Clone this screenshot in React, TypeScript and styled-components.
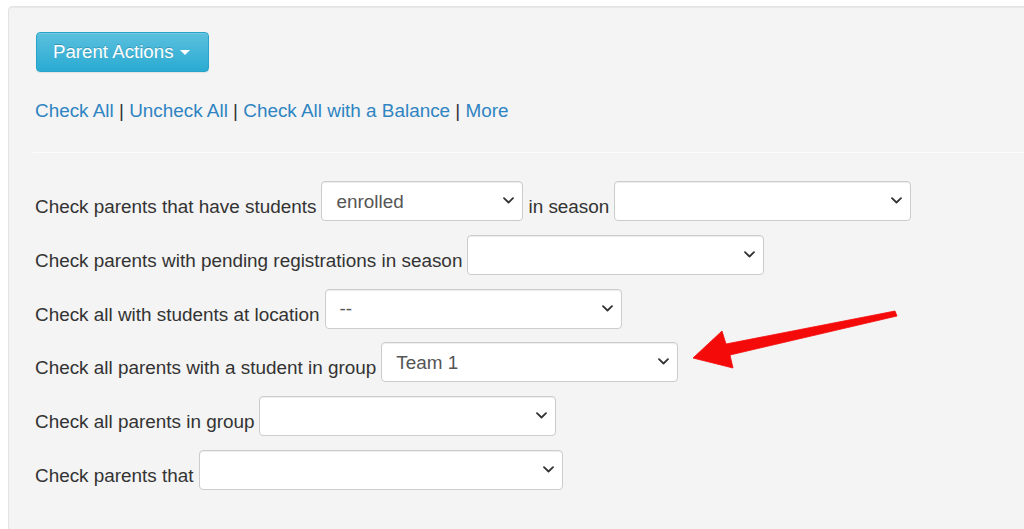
import React from 'react';
import styled, { createGlobalStyle } from 'styled-components';

const Global = createGlobalStyle`
  html, body { margin: 0; padding: 0; background: #fff; overflow: hidden; }
  body {
    font-family: "Liberation Sans", Arial, Helvetica, sans-serif;
    font-size: 18.9px;
    color: #333;
  }
`;

const Page = styled.div`
  position: relative;
  width: 1024px;
  height: 529px;
  overflow: hidden;
  box-sizing: border-box;
  padding: 6px 0 0 8px;
`;

const Well = styled.div`
  width: 1050px;
  min-height: 560px;
  box-sizing: border-box;
  background: #f4f4f4;
  border: 1px solid #e3e3e3;
  border-radius: 4px;
  box-shadow: inset 0 1px 1px rgba(0, 0, 0, 0.05);
  padding: 25px 0 0 26px;
`;

const ActionButton = styled.button`
  display: inline-flex;
  align-items: center;
  gap: 6px;
  height: 40px;
  box-sizing: border-box;
  margin-left: 1px;
  padding: 0 18px 0 16px;
  border: 1px solid #28a4c9;
  border-radius: 4px;
  background: linear-gradient(to bottom, #5bc0de 0%, #2aabd2 100%);
  color: #fff;
  font: inherit;
  font-size: 18.7px;
  text-shadow: 0 -1px 0 rgba(0, 0, 0, 0.2);
  box-shadow: inset 0 1px 0 rgba(255, 255, 255, 0.15), 0 1px 1px rgba(0, 0, 0, 0.075);
  cursor: pointer;
`;

const Caret = styled.span`
  display: inline-block;
  width: 0;
  height: 0;
  border-top: 5px solid #fff;
  border-left: 5px solid transparent;
  border-right: 5px solid transparent;
`;

const LinkBar = styled.div`
  margin-top: 25px;
  line-height: 27px;
  color: #333;
`;

const Link = styled.a`
  color: #2f84c2;
  text-decoration: none;
  cursor: pointer;
`;

const Divider = styled.hr`
  margin: 28px 0 28px -2px;
  border: 0;
  border-top: 1px solid #fbfbfb;
  height: 0;
`;

const Rows = styled.div`
  display: flex;
  flex-direction: column;
  gap: 13.8px;
`;

const Row = styled.div`
  display: flex;
  align-items: flex-end;
  gap: 5px;
`;

const Label = styled.span`
  line-height: 29px;
  white-space: nowrap;
`;

const SelectBox = styled.div<{ $w: number }>`
  position: relative;
  flex: none;
  width: ${(p) => p.$w}px;
  height: 40px;
`;

const NativeSelect = styled.select`
  appearance: none;
  -webkit-appearance: none;
  width: 100%;
  height: 100%;
  box-sizing: border-box;
  border: 1px solid #ccc;
  border-radius: 4px;
  background: #fff;
  padding: 0 30px 0 14px;
  font: inherit;
  color: #555;
  box-shadow: inset 0 1px 1px rgba(0, 0, 0, 0.075);
  outline: none;
`;

const Chevron = styled.svg`
  position: absolute;
  right: 9px;
  top: 50%;
  margin-top: -4px;
  pointer-events: none;
`;

const Overlay = styled.svg`
  position: absolute;
  left: 0;
  top: 0;
  pointer-events: none;
`;

function Select({ w, value }: { w: number; value?: string }) {
  return (
    <SelectBox $w={w}>
      <NativeSelect defaultValue={value ?? ''}>
        <option value={value ?? ''}>{value ?? ''}</option>
      </NativeSelect>
      <Chevron width="11" height="7" viewBox="0 0 11 7">
        <path d="M1 1.2 L5.5 5.5 L10 1.2" fill="none" stroke="#333" strokeWidth="1.8" strokeLinecap="round" strokeLinejoin="round" />
      </Chevron>
    </SelectBox>
  );
}

export default function App() {
  return (
    <>
      <Global />
      <Page>
        <Well>
          <ActionButton>
            Parent Actions <Caret />
          </ActionButton>
          <LinkBar>
            <Link>Check All</Link> | <Link>Uncheck All</Link> | <Link>Check All with a Balance</Link> | <Link>More</Link>
          </LinkBar>
          <Divider />
          <Rows>
            <Row>
              <Label>Check parents that have students</Label>
              <Select w={202} value="enrolled" />
              <Label>in season</Label>
              <Select w={297} />
            </Row>
            <Row>
              <Label>Check parents with pending registrations in season</Label>
              <Select w={297} />
            </Row>
            <Row>
              <Label>Check all with students at location</Label>
              <Select w={297} value="--" />
            </Row>
            <Row>
              <Label>Check all parents with a student in group</Label>
              <Select w={297} value="Team 1" />
            </Row>
            <Row>
              <Label>Check all parents in group</Label>
              <Select w={297} />
            </Row>
            <Row>
              <Label>Check parents that</Label>
              <Select w={364} />
            </Row>
          </Rows>
        </Well>
        <Overlay width="1024" height="529" viewBox="0 0 1024 529">
          <polygon
            points="693,358 722,331 726,344 895,311 897,316 730,355 733,368"
            fill="#f50a0a"
            stroke="#f50a0a"
            strokeWidth="0.8"
            strokeLinejoin="round"
          />
        </Overlay>
      </Page>
    </>
  );
}
